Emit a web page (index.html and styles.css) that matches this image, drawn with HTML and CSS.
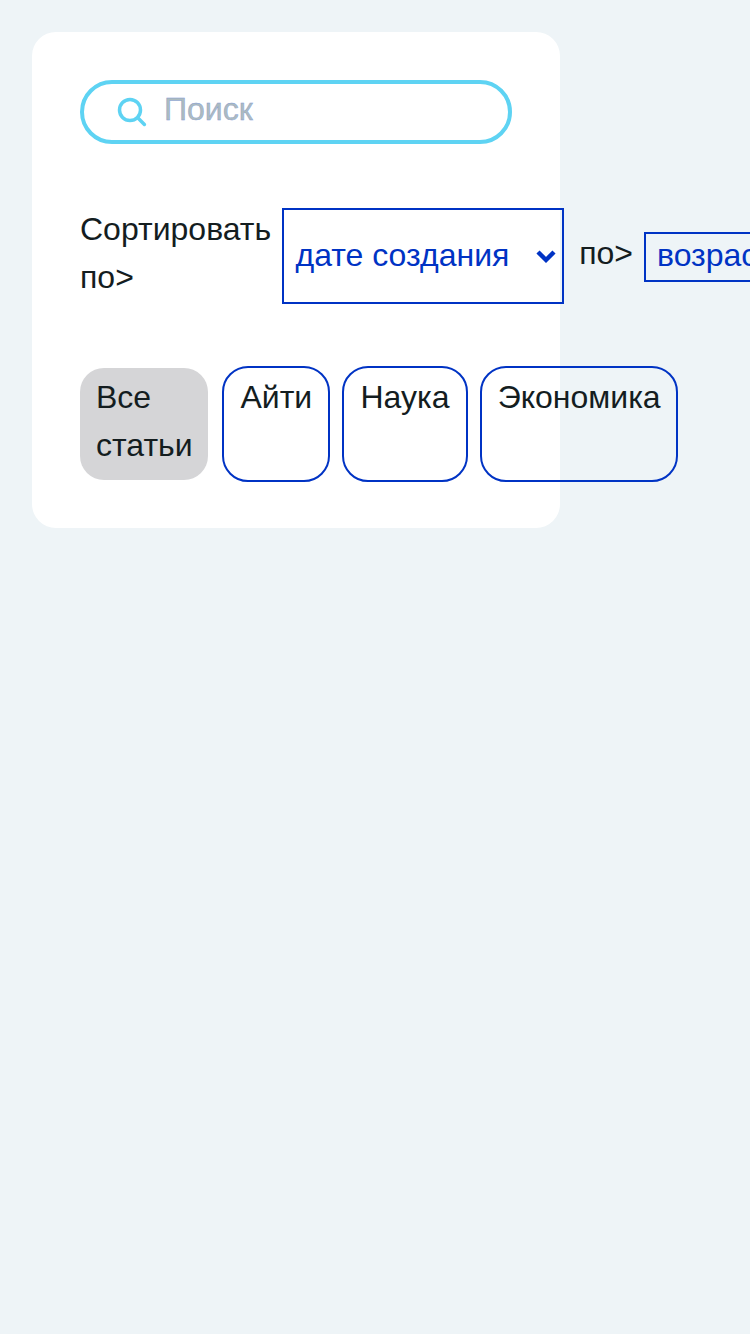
FILE: index.html
```html
<!DOCTYPE html>
<html lang="ru">
<head>
<meta charset="utf-8">
<title>Статьи</title>
<link rel="stylesheet" href="styles.css">
</head>
<body>
<main class="card">
  <label class="search">
    <svg class="search-icon" viewBox="0 0 32 32"><circle cx="14" cy="14" r="10.5"/><path d="M22 22 28.4 28.4"/></svg>
    <span class="placeholder">Поиск</span>
  </label>
  <div class="sort">
    <span class="sort-label">Сортировать по&gt;</span>
    <div class="select select-field"><span>дате создания</span><svg class="chevron" viewBox="0 0 20 14"><path d="M2 2 10 10 18 2"/></svg></div>
    <span class="order-label">по&gt;</span>
    <div class="select select-order"><span>возрастанию</span></div>
  </div>
  <div class="tabs">
    <div class="tab tab-active">Все статьи</div>
    <div class="tab">Айти</div>
    <div class="tab">Наука</div>
    <div class="tab tab-last">Экономика</div>
  </div>
</main>
</body>
</html>
```
FILE: styles.css
```css
* { box-sizing: border-box; }
body {
  margin: 0;
  padding: 32px;
  min-height: 1334px;
  overflow: hidden;
  background: #eef4f7;
  color: #141d1f;
  font: 32px/48px "Liberation Sans", Arial, sans-serif;
}
.card {
  width: 528px;
  height: 496px;
  padding: 48px;
  border-radius: 24px;
  background: #fff;
}
.search {
  display: flex;
  height: 64px;
  padding-left: 32px;
  border: 4px solid #5ed3f3;
  border-radius: 32px;
}
.search-icon {
  width: 32px;
  height: 32px;
  margin-top: 12px;
  fill: none;
  stroke: #5ed3f3;
  stroke-width: 3.5;
  stroke-linecap: round;
}
.placeholder {
  margin-left: 16px;
  line-height: 51px;
  color: #adbbbe;
  -webkit-text-stroke: 0.4px #7f9ad6;
}
.sort {
  display: flex;
  align-items: center;
  height: 96px;
  margin-top: 64px;
}
.sort-label {
  flex: 0 0 202px;
  padding-bottom: 6px;
}
.select {
  display: flex;
  flex-shrink: 0;
  align-items: center;
  border: 2px solid #0033c4;
  color: #0033c4;
  white-space: nowrap;
}
.select-field {
  justify-content: space-between;
  width: 282px;
  height: 96px;
  padding: 0 6px 2px 11.5px;
}
.chevron {
  width: 20px;
  height: 14px;
  margin-top: 3px;
  fill: none;
  stroke: #0033c4;
  stroke-width: 4.4;
}
.order-label {
  flex-shrink: 0;
  width: 64.8px;
  margin-left: 15.2px;
  padding-bottom: 6px;
}
.select-order {
  width: 270px;
  height: 50px;
  margin-top: 2px;
  padding: 0 0 4px 11px;
}
.tabs {
  display: flex;
  align-items: stretch;
  width: 598px;
  height: 116px;
  margin-top: 62px;
}
.tab {
  flex-shrink: 0;
  margin-right: 12px;
  padding: 5px 16.1px;
  border: 2px solid #0033c4;
  border-radius: 26px;
}
.tab-active {
  width: 128px;
  margin: 2px 14.4px 2px 0;
  padding: 5px 16px;
  border: 0;
  border-radius: 24px;
  background: #d5d5d7;
}
.tab-last {
  margin-right: 0;
  padding-right: 15.6px;
}
```
